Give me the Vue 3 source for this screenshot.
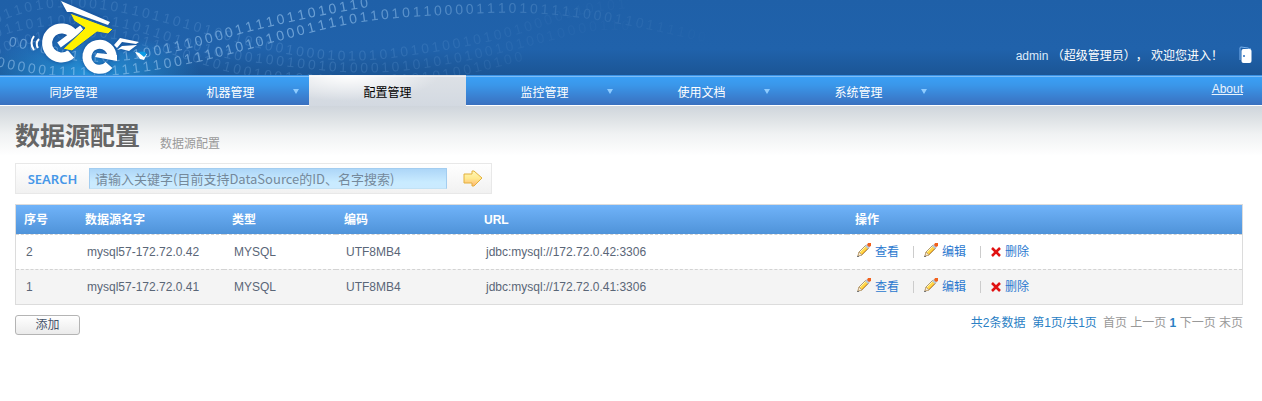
<script setup>
const tabs = [
  { label: '同步管理' },
  { label: '机器管理', menu: true },
  { label: '配置管理', active: true },
  { label: '监控管理', menu: true },
  { label: '使用文档', menu: true },
  { label: '系统管理', menu: true }
]

const sources = [
  { id: 2, name: 'mysql57-172.72.0.42', type: 'MYSQL', encode: 'UTF8MB4', url: 'jdbc:mysql://172.72.0.42:3306' },
  { id: 1, name: 'mysql57-172.72.0.41', type: 'MYSQL', encode: 'UTF8MB4', url: 'jdbc:mysql://172.72.0.41:3306' }
]

// Digits are set apart with thin spaces.
const spaced = (digits) => digits.split('').join('\u2009')

const waves = [
  {
    id: 'wave-a',
    tone: 'bright',
    d: 'M8 46 C50 52 60 62 100 62 S200 46 230 37 S320 14 400 2',
    digits: '00000011101110011100001111011010110'
  },
  {
    id: 'wave-b',
    tone: 'bright',
    d: 'M-4 66 C60 82 110 78 167 68 S260 45 317 31 S420 16 490 13 S640 26 720 46',
    digits: '000001111111111100111010101000111101101011000011101011110001101111001'
  },
  {
    id: 'wave-c',
    tone: 'faint',
    d: 'M-4 24 C30 6 70 4 113 11 S220 40 267 50 S350 64 400 57 S500 42 550 24 S620 10 700 4',
    digits: '0110101100101101101010010100100010101010101001010010000110101'
  },
  {
    id: 'wave-d',
    tone: 'faint',
    d: 'M-4 38 C30 24 90 20 127 29 S200 56 250 62 S350 76 400 71 S500 54 560 38 S640 32 700 44',
    digits: '0110110010011011010010100100100101000101010101001010010000110'
  },
  {
    id: 'wave-e',
    tone: 'faint',
    d: 'M-4 56 C30 38 90 32 130 42 S220 74 270 80 S400 88 450 78 S540 54 600 44',
    digits: '001011001001101101001010010010010001010101010010100'
  }
]
</script>

<template>
  <div class="page">
    <header class="banner">
      <svg class="binary" width="720" height="75" aria-hidden="true">
        <defs>
          <linearGradient id="fade" x1="0" x2="1">
            <stop offset="0" stop-color="#fff" stop-opacity=".8" />
            <stop offset=".45" stop-color="#fff" stop-opacity=".9" />
            <stop offset=".62" stop-color="#fff" stop-opacity=".6" />
            <stop offset=".76" stop-color="#fff" stop-opacity=".25" />
            <stop offset="1" stop-color="#fff" stop-opacity="0" />
          </linearGradient>
          <mask id="fade-mask" maskUnits="userSpaceOnUse" x="0" y="0" width="720" height="75">
            <rect width="720" height="75" fill="url(#fade)" />
          </mask>
          <path v-for="w in waves" :id="w.id" :key="w.id" :d="w.d" />
        </defs>
        <g mask="url(#fade-mask)">
          <text v-for="w in waves" :key="w.id" :class="w.tone">
            <textPath :href="'#' + w.id">{{ spaced(w.digits) }}</textPath>
          </text>
        </g>
      </svg>

      <svg class="logo" width="124" height="75" viewBox="0 0 124 75" role="img" aria-label="eTe">
        <g class="glow">
          <g fill="none" stroke="#fff">
            <path d="M6 36 Q1 43 6 50" stroke-width="2" />
            <path d="M11 39 Q7 43 10 48" stroke-width="2" />
            <path d="M45 34 A14.500 14.500 0 1 0 43 54" stroke-width="10" />
            <path d="M31 45 L54 28" stroke-width="6" />
            <path d="M81 65 A12.500 12.500 0 1 1 84 58" stroke-width="9" />
          </g>
          <path d="M69 53 L89 55 L89 61 L67 57 Z" fill="#fff" />
          <path d="M33 1 L82 22 L80 25 L44 12 L39 12 Z" fill="#fff" />
          <path d="M86 45 L92 38 L111 42 L108 44 L94 42 L89 48 Z" fill="#fff" />
          <path d="M89 50 L94 46 L109 45 L101 51 L93 49 Z" fill="#fff" />
        </g>
        <path d="M42 13 L85 29 L80 34 L69 32 L44 51 L35 49 L57 28 L46 21 Z" fill="#fff200" stroke="#1a5cab" stroke-width="1" />
        <path d="M107 52 L119 54 L116 60 L112 59 Z" fill="#fff" />
        <path d="M110 52 Q119 50 118 55 L116 57 Z" fill="#0c9be4" />
      </svg>

      <div class="account">
        <span><span class="user">admin</span> （超级管理员）， 欢迎您进入！</span>
        <a class="logout" href="#" aria-label="退出">
          <svg width="14" height="18" viewBox="0 0 14 18">
            <path d="M1 14 V2 Q1 1 2 1 L9 2 Q10 3 12 3" fill="none" stroke="#78b1ee" stroke-width="1" />
            <rect x="2.500" y="3" width="10" height="14" rx="2" fill="#fff" />
            <circle cx="5" cy="10" r="1" fill="#2a6fc0" />
          </svg>
        </a>
      </div>
    </header>

    <nav class="nav">
      <ul class="tabs">
        <li v-for="t in tabs" :key="t.label" :class="{ active: t.active }">
          <a href="#">{{ t.label }}</a>
          <svg v-if="t.menu" class="caret" width="6" height="5" viewBox="0 0 6 5" aria-hidden="true">
            <path d="M0 0 H6 L3 5 Z" fill="#8ecbff" />
          </svg>
        </li>
      </ul>
      <a class="about" href="#">About</a>
    </nav>

    <main class="content">
      <div class="heading">
        <h1>数据源配置</h1>
        <span>数据源配置</span>
      </div>

      <form class="search" @submit.prevent>
        <label for="keyword">SEARCH</label>
        <input id="keyword" type="text" placeholder="请输入关键字(目前支持DataSource的ID、名字搜索)" />
        <button type="submit" aria-label="搜索">
          <svg width="20" height="17" viewBox="0 0 20 17">
            <defs>
              <linearGradient id="gold" x1="0" y1="0" x2="0" y2="1">
                <stop offset="0" stop-color="#fff7b8" />
                <stop offset=".5" stop-color="#ffe98e" />
                <stop offset="1" stop-color="#ffb574" />
              </linearGradient>
            </defs>
            <path d="M1 4 H9 V1 H11 L19 8 L11 16 H9 V13 H1 Z" fill="url(#gold)" stroke="#e3b13c" stroke-width="1" stroke-linejoin="round" />
          </svg>
        </button>
      </form>

      <table class="grid">
        <thead>
          <tr>
            <th class="c-id">序号</th>
            <th class="c-name">数据源名字</th>
            <th class="c-type">类型</th>
            <th class="c-code">编码</th>
            <th class="c-url">URL</th>
            <th>操作</th>
          </tr>
        </thead>
        <tbody>
          <tr v-for="s in sources" :key="s.id">
            <td>{{ s.id }}</td>
            <td>{{ s.name }}</td>
            <td>{{ s.type }}</td>
            <td>{{ s.encode }}</td>
            <td>{{ s.url }}</td>
            <td>
              <div class="actions">
                <a v-for="a in ['查看', '编辑']" :key="a" href="#">
                  <svg class="pencil" width="14" height="14" viewBox="0 0 14 14" aria-hidden="true">
                    <path d="M1 13 L2 9 L9 2 L12 5 L5 12 Z" fill="#ffd84a" stroke="#b39a6c" stroke-width="1" />
                    <path d="M3 9 L9 3" stroke="#fff5bd" stroke-width="1" />
                    <path d="M5 11 L11 5" stroke="#f0a526" stroke-width="1" />
                    <path d="M1 13 L2 9 L5 12 Z" fill="#fbeed6" stroke="#c0a57c" stroke-width="1" />
                    <path d="M8 3 L11 6 L13 4 L10 1 Z" fill="#b9c8d4" />
                    <path d="M11 0 H14 V3 L12 4 L10 2 Z" fill="#f2611c" />
                    <path d="M0 13 H2 V14 H0 Z" fill="#777" />
                  </svg>{{ a }}
                </a>
                <a href="#">
                  <svg class="cross" width="10" height="10" viewBox="0 0 10 10" aria-hidden="true">
                    <path d="M1 1 L9 9 M9 1 L1 9" stroke="#e01212" stroke-width="2.500" />
                  </svg>删除
                </a>
              </div>
            </td>
          </tr>
        </tbody>
      </table>

      <div class="footer">
        <button class="add" type="button">添加</button>
        <div class="pager">
          <span class="total">共2条数据&nbsp; 第1页/共1页</span>
          <span>首页</span> <span>上一页</span> <strong>1</strong> <span>下一页</span> <span>末页</span>
        </div>
      </div>
    </main>
  </div>
</template>

<style>
body {
  margin: 0;
  background: #fff;
}
</style>

<style scoped>
.page {
  font: 12px/18px "Liberation Sans", "Noto Sans CJK SC", sans-serif;
  color: #5a6677;
  text-spacing-trim: space-all;
}

a {
  text-decoration: none;
}

.banner {
  position: relative;
  display: flex;
  justify-content: flex-end;
  height: 75px;
  overflow: hidden;
  background:
    radial-gradient(ellipse 110px 42px at 90px 75px, rgba(40, 160, 232, .85), rgba(40, 150, 226, 0)),
    linear-gradient(#1f60a8, #2062ab 66%, #1b5595);
}

.binary {
  position: absolute;
  left: 0;
  top: 0;
}

.binary text {
  font: 14px "Liberation Sans", sans-serif;
}

.bright {
  fill: rgba(170, 212, 248, .6);
}

.faint {
  fill: rgba(140, 190, 240, .22);
}

.logo {
  position: absolute;
  left: 28px;
  top: 0;
}

.glow {
  filter: drop-shadow(0 0 2px #0f4a96);
}

.account {
  display: flex;
  align-items: flex-start;
  gap: 16px;
  padding: 46px 9px 0 0;
  color: #fff;
  line-height: 20px;
}

.user {
  color: #dceafa;
}

.logout,
.logout svg {
  display: block;
}

.nav {
  display: flex;
  justify-content: space-between;
  height: 30px;
  border-bottom: 1px solid #fff;
  background: linear-gradient(#3b92e4 1px, #7dbdf7 1px, #7dbdf7 2px, #3a9ff5 2px, #3a97ea 10px, #3a70bf);
}

.tabs {
  display: flex;
  margin: 0 0 0 -5px;
  padding: 0;
  list-style: none;
}

.tabs li {
  position: relative;
  width: 157px;
  height: 31px;
  text-align: center;
  line-height: 36px;
}

.tabs a {
  display: block;
  height: 31px;
  color: #fff;
}

.tabs .active {
  background:
    linear-gradient(transparent 1px, rgba(255, 255, 255, .5) 1px, rgba(255, 255, 255, .5) 2px, transparent 2px),
    radial-gradient(ellipse 90px 26px at 40px 0, #fff, rgba(255, 255, 255, 0)),
    linear-gradient(#dde1e6, #d3d9e1);
}

.tabs .active a {
  color: #000;
}

.caret {
  position: absolute;
  right: 10px;
  top: 14px;
}

.about {
  margin-right: 19px;
  color: #e9f3fd;
  line-height: 28px;
  text-decoration: underline;
}

.content {
  padding: 12px 19px 0 15px;
  background: linear-gradient(#cfd5dc, #dfe3e6 14px, #f0f2f3 28px, #fff 50px);
}

.heading {
  display: flex;
  align-items: center;
  gap: 20px;
  height: 36px;
  color: #999;
}

.heading h1 {
  margin: 0;
  color: #666;
  font-size: 25px;
  line-height: 36px;
}

.heading span {
  padding-top: 16px;
}

.search {
  display: flex;
  align-items: center;
  box-sizing: border-box;
  width: 477px;
  height: 31px;
  margin: 9px 0 10px;
  border: 1px solid #e8e8e8;
  background: linear-gradient(#fff, #f1f1f1);
}

.search label {
  width: 73px;
  text-align: center;
  color: #4697e8;
  font: 600 13px/20px "Noto Sans", "Open Sans", sans-serif;
}

.search input {
  box-sizing: border-box;
  width: 358px;
  height: 21px;
  padding: 0 5px;
  border: 1px solid #a3cdf0;
  border-bottom-color: #c2e2f5;
  outline: 0;
  background: linear-gradient(#add6f8, #c9ebff 70%, #caeaff);
  font: 13px/19px "Noto Sans CJK SC", sans-serif;
}

.search input::placeholder {
  color: #75899b;
  opacity: 1;
}

.search button {
  margin-left: 16px;
  padding: 0;
  border: 0;
  background: none;
}

.search svg {
  display: block;
}

.grid {
  width: 100%;
  border: 1px solid #dcdcdc;
  border-spacing: 0;
  table-layout: fixed;
}

.grid thead {
  background: linear-gradient(#70b3f9, #4f93d9);
}

.grid th {
  height: 29px;
  padding: 0 8px;
  color: #fff;
  text-align: left;
}

.grid td {
  height: 34px;
  padding: 0 10px;
  border-top: 1px dashed #d3d3d3;
}

.grid tbody tr {
  background: #fff;
}

.grid tbody tr:nth-child(even) {
  background: #f4f4f4;
}

.c-id {
  width: 45px;
}

.c-name {
  width: 131px;
}

.c-type {
  width: 96px;
}

.c-code {
  width: 124px;
}

.c-url {
  width: 355px;
}

.actions {
  display: flex;
}

.actions a {
  display: flex;
  align-items: center;
  gap: 4px;
  color: #2a78cf;
}

.actions a + a {
  margin-left: 14px;
}

.actions a + a::before {
  content: "";
  width: 1px;
  height: 12px;
  margin-right: 6px;
  background: #ccc;
}

.pencil {
  margin-bottom: 4px;
}

.footer {
  display: flex;
  justify-content: space-between;
  align-items: flex-start;
  padding-top: 10px;
}

.add {
  width: 65px;
  height: 20px;
  padding: 0;
  border: 1px solid #b4b4b4;
  border-radius: 3px;
  background: linear-gradient(#fff, #ebebeb);
  color: #46536a;
  font: inherit;
}

.pager {
  color: #999;
  line-height: 16px;
}

.total {
  margin-right: 6px;
}

.total,
.pager strong {
  color: #2a80c4;
}
</style>
